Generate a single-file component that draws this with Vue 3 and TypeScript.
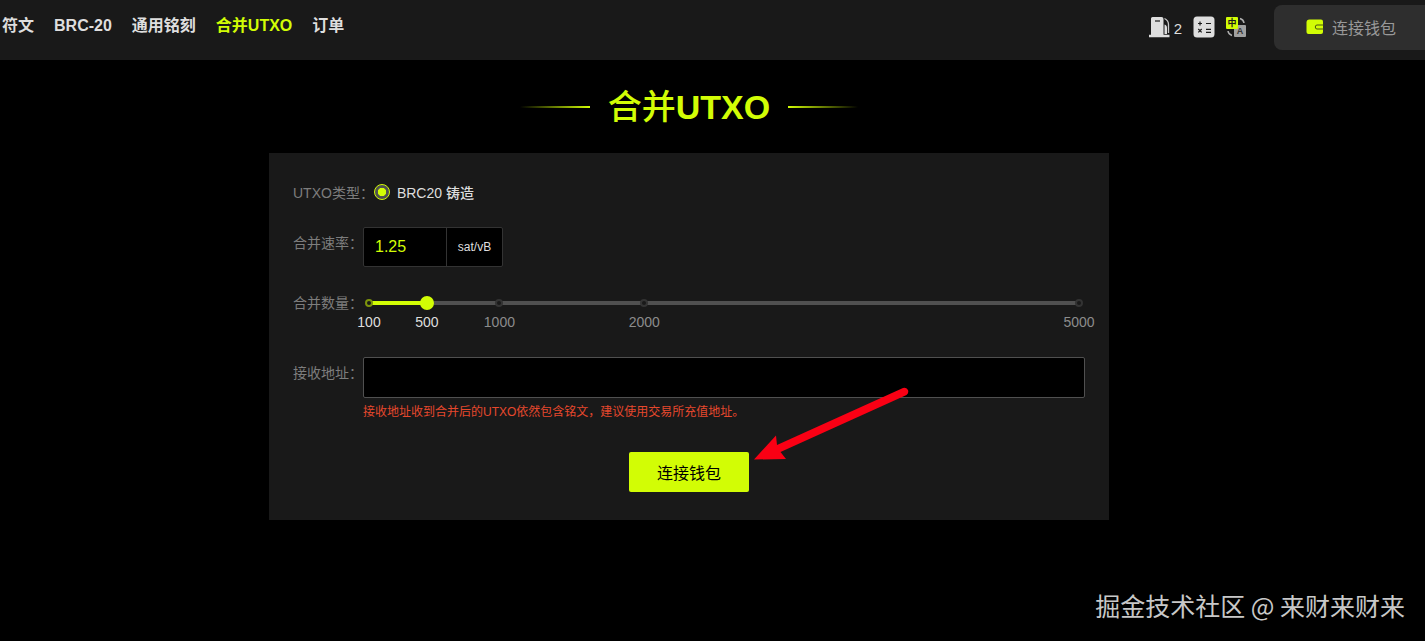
<script setup lang="ts">
import { computed, ref } from 'vue'

interface NavItem {
  label: string
  active?: boolean
}

const navItems: NavItem[] = [
  { label: '符文' },
  { label: 'BRC-20' },
  { label: '通用铭刻' },
  { label: '合并UTXO', active: true },
  { label: '订单' },
]

const MIN = 100
const MAX = 5000
const marks: number[] = [100, 500, 1000, 2000, 5000]

const gasPrice = ref(2)
const utxoType = ref('brc20')
const feeRate = ref('1.25')
const amount = ref(500)
const address = ref('')

const percent = (value: number): string => `${((value - MIN) / (MAX - MIN)) * 100}%`
const fillWidth = computed(() => percent(amount.value))
</script>

<template>
  <div class="page">
    <header class="topbar">
      <nav class="nav">
        <a
          v-for="item in navItems"
          :key="item.label"
          href="#"
          class="nav-link"
          :class="{ active: item.active }"
        >{{ item.label }}</a>
      </nav>
      <div class="tools">
        <a href="#" class="gas" aria-label="Gas">
          <svg width="22" height="22" viewBox="0 0 22 22" aria-hidden="true">
            <path d="M2 2.500Q2 1 3.500 1H12.500Q14.500 1 14.500 3V18.800H20.500V21.300H0V18.800H2Z" fill="#dedede" />
            <path d="M15.500 8.500Q18 9 18 12V18H15.500Z" fill="#dedede" />
            <path d="M15.500 2.500Q19.500 4.500 19.500 8.500V17" fill="none" stroke="#c8c8c8" stroke-width="1.300" />
            <path d="M6 5H11" stroke="#1a1a1a" stroke-width="1.200" />
          </svg>
          <span>{{ gasPrice }}</span>
        </a>
        <button type="button" class="icon-button" aria-label="Calculator">
          <svg width="22" height="22" viewBox="0 0 22 22" aria-hidden="true">
            <rect x="0.500" y="0.500" width="21" height="21" rx="3.500" fill="#dedede" />
            <g stroke="#1a1a1a" stroke-width="1.200" fill="none">
              <path d="M5 7.500H9M7 5.500V9.500M13 7.500H18M5.300 13L8.700 16.400M8.700 13L5.300 16.400M13 13.300H18M13 16.300H18" />
            </g>
          </svg>
        </button>
        <button type="button" class="icon-button" aria-label="Language">
          <svg width="22" height="22" viewBox="0 0 22 22" aria-hidden="true">
            <rect x="9" y="9" width="12" height="12" rx="1" fill="#a0a0a0" />
            <rect x="1" y="1" width="12" height="12" rx="1" fill="#d2fd05" />
            <path d="M15 2.500Q18.500 3.500 19 7M7 19.500Q3.500 18.500 3 15" fill="none" stroke="#b0b0b0" stroke-width="1.500" />
            <text x="7" y="10" class="glyph">中</text>
            <text x="15" y="18" class="glyph letter">A</text>
          </svg>
        </button>
        <button type="button" class="wallet-button">
          <svg width="18" height="16" viewBox="0 0 18 16" aria-hidden="true">
            <path d="M3.500 0.500H15Q17 0.500 17 2.500V13Q17 15 15 15H2.500Q0.500 15 0.500 13V3.500Q0.500 0.500 3.500 0.500Z" fill="#d2fd05" />
            <path d="M17.500 6H11Q9.300 6 9.300 8T11 10H17.500" fill="none" stroke="#4a5612" stroke-width="1" />
          </svg>
          <span>连接钱包</span>
        </button>
      </div>
    </header>

    <main class="content">
      <h1 class="title"><span class="title-text"><span class="title-cjk">合并</span>UTXO</span></h1>

      <form class="card" @submit.prevent>
        <div class="row type-row">
          <span class="label">UTXO类型：</span>
          <label class="radio">
            <input v-model="utxoType" type="radio" name="utxo-type" value="brc20">
            <span>BRC20 铸造</span>
          </label>
        </div>

        <div class="row">
          <label class="label" for="rate">合并速率：</label>
          <div class="rate-box">
            <input id="rate" v-model="feeRate" type="text" inputmode="decimal">
            <span class="unit">sat/vB</span>
          </div>
        </div>

        <div class="row slider-row">
          <label class="label" for="amount">合并数量：</label>
          <div class="slider">
            <div class="rail">
              <div class="fill" :style="{ width: fillWidth }" />
              <span
                v-for="mark in marks"
                :key="mark"
                class="dot"
                :class="{ reached: mark <= amount }"
                :style="{ left: percent(mark) }"
              />
              <input id="amount" v-model.number="amount" type="range" :min="MIN" :max="MAX" step="100">
              <span
                v-for="mark in marks"
                :key="`label-${mark}`"
                class="mark"
                :class="{ reached: mark <= amount }"
                :style="{ left: percent(mark) }"
              >{{ mark }}</span>
            </div>
          </div>
        </div>

        <div class="row">
          <label class="label" for="address">接收地址：</label>
          <div class="address">
            <input id="address" v-model="address" type="text">
            <p class="hint">接收地址收到合并后的UTXO依然包含铭文，建议使用交易所充值地址。</p>
          </div>
        </div>

        <div class="action">
          <button type="submit" class="connect">连接钱包</button>
          <svg class="arrow" width="160" height="78" viewBox="0 0 160 78" aria-hidden="true">
            <path d="M4 74.500L26 50.500L27 60L153 3Q156 2 158 5Q159 8.500 156.500 10L30.500 67L36 74Z" fill="#fa0014" />
          </svg>
        </div>
      </form>
    </main>

    <p class="watermark">掘金技术社区 @ 来财来财来</p>
  </div>
</template>

<style>
body {
  background: #000;
}
</style>

<style scoped>
.page {
  position: relative;
  min-height: 100vh;
  overflow: hidden;
  background: #000;
  color: #dedede;
  font-family: "Liberation Sans", "Noto Sans CJK SC", sans-serif;
  font-size: 14px;
}

* {
  box-sizing: border-box;
}

button,
input {
  font-family: inherit;
}

button {
  border: 0;
  padding: 0;
  background: none;
  cursor: pointer;
}

.topbar {
  display: flex;
  justify-content: space-between;
  height: 60px;
  padding-left: 2px;
  background: #191919;
}

.nav {
  display: flex;
  gap: 20px;
  padding-top: 14px;
}

.nav-link {
  color: #dedede;
  font-size: 16px;
  font-weight: 700;
  line-height: 24px;
  text-decoration: none;
  white-space: nowrap;
}

.nav-link.active {
  color: #d2fd05;
}

.tools {
  display: flex;
  align-items: center;
  height: 54px;
}

.gas {
  display: flex;
  align-items: center;
  gap: 3px;
  margin-right: 11px;
  color: #dedede;
  font-size: 15px;
  line-height: 20px;
  text-decoration: none;
}

.gas span {
  padding-top: 4px;
}

.icon-button {
  width: 22px;
  height: 22px;
  margin-right: 10px;
}

.icon-button svg {
  display: block;
}

.glyph {
  fill: #1a1a1a;
  font-size: 9px;
  font-weight: 700;
  text-anchor: middle;
}

.letter {
  fill: #333;
}

.wallet-button {
  display: flex;
  flex: none;
  align-items: center;
  gap: 8px;
  height: 45px;
  margin-left: 17px;
  padding: 0 29px 0 32px;
  border-radius: 8px 0 0 8px;
  background: #2e2e2e;
  color: #999;
  font-size: 16px;
}

.content {
  padding: 24px 47px 0 0;
}

.title {
  display: flex;
  align-items: center;
  justify-content: center;
  gap: 18px;
  margin: 0 0 23px;
  color: #d2fd05;
  font-size: 34px;
  line-height: 46px;
}

.title::before,
.title::after {
  width: 70px;
  height: 2px;
  background: linear-gradient(to left, #d2fd05, transparent);
  content: "";
}

.title::after {
  background: linear-gradient(to right, #d2fd05, transparent);
}

.title-cjk {
  font-weight: 500;
}

.card {
  max-width: 840px;
  margin: 0 auto;
  padding: 24px 24px 28px;
  background: #191919;
}

.row {
  display: flex;
  align-items: flex-start;
}

.label {
  flex: none;
  color: #7d7d7d;
  line-height: 32px;
}

.type-row {
  height: 50px;
}

.radio {
  display: flex;
  align-items: center;
  gap: 7px;
  height: 30px;
  font-weight: 500;
}

.radio input {
  width: 16px;
  height: 16px;
  margin: 0;
  border: 1px solid #d2fd05;
  border-radius: 50%;
  appearance: none;
  background: #505050;
}

.radio input:checked {
  background: radial-gradient(circle closest-side, #d2fd05 55%, #505050 65%);
}

.rate-box {
  display: flex;
  width: 140px;
  height: 40px;
  border: 1px solid #333;
  border-radius: 2px;
  background: #000;
}

.rate-box input {
  flex: 1;
  min-width: 0;
  padding: 0 11px;
  border: 0;
  outline: 0;
  background: none;
  color: #d2fd05;
  font-size: 16px;
}

.unit {
  width: 56px;
  border-left: 1px solid #333;
  font-size: 12px;
  line-height: 38px;
  text-align: center;
}

.slider-row {
  height: 70px;
  margin-top: 20px;
}

.slider {
  flex: 1;
  padding: 14px 6px 0;
}

.rail {
  position: relative;
  height: 4px;
  border-radius: 2px;
  background: #505050;
}

.fill {
  height: 4px;
  background: #d2fd05;
}

.dot {
  position: absolute;
  top: -2px;
  width: 8px;
  height: 8px;
  margin-left: -4px;
  border: 2px solid #333;
  border-radius: 50%;
  background: #191919;
}

.dot.reached {
  border-color: #7d940c;
}

.rail input {
  position: absolute;
  top: -5px;
  left: -7px;
  width: calc(100% + 14px);
  height: 14px;
  margin: 0;
  appearance: none;
  background: transparent;
}

.rail input::-webkit-slider-thumb {
  width: 14px;
  height: 14px;
  border-radius: 50%;
  appearance: none;
  background: #d2fd05;
}

.mark {
  position: absolute;
  top: 13px;
  color: #8c8c8c;
  line-height: 16px;
  transform: translateX(-50%);
}

.mark.reached {
  color: #dedede;
}

.address {
  flex: 1;
}

.address input {
  display: block;
  width: 100%;
  height: 41px;
  padding: 0 11px;
  border: 1px solid #505050;
  border-radius: 2px;
  outline: 0;
  background: #000;
  color: #dedede;
  font-size: 14px;
}

.hint {
  margin: 5px 0 0;
  color: #e6482d;
  font-size: 12px;
  line-height: 18px;
}

.action {
  position: relative;
  width: 120px;
  margin: 31px auto 0;
}

.connect {
  display: block;
  width: 100%;
  height: 40px;
  border-radius: 2px;
  background: #d2fd05;
  color: #000;
  font-size: 16px;
}

.arrow {
  position: absolute;
  bottom: 29px;
  left: calc(100% + 1px);
}

.watermark {
  position: absolute;
  right: 20px;
  bottom: 18px;
  margin: 0;
  color: #c8c8c8;
  font-family: "Noto Sans CJK SC", sans-serif;
  font-size: 25px;
  line-height: 36px;
}
</style>
